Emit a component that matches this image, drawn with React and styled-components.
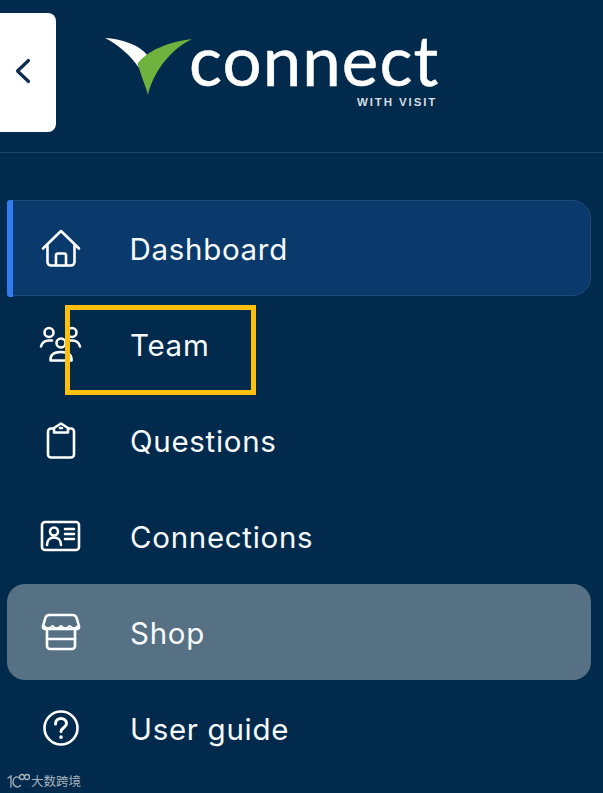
import React from "react";
import styled, { createGlobalStyle } from "styled-components";

const Global = createGlobalStyle`
  html, body { margin: 0; padding: 0; background: #012a4c; overflow: hidden; }
  #root { width: 603px; height: 793px; }
`;

const Page = styled.div`
  position: relative;
  width: 603px;
  height: 793px;
  background: #012a4c;
  color: #fff;
  font-family: "Inter", "Noto Sans", sans-serif;
  overflow: hidden;
`;

const Header = styled.header`
  height: 152px;
  display: flex;
  align-items: flex-start;
  border-bottom: 1.5px solid #1c4468;
`;

const CollapseButton = styled.button`
  width: 56px;
  height: 119px;
  margin-top: 13px;
  padding: 0 0 4px 15px;
  border: 0;
  border-radius: 0 8px 8px 0;
  background: #fff;
  display: flex;
  align-items: center;
  justify-content: flex-start;
`;

const Logo = styled.div`
  display: grid;
  grid-template-columns: 85px auto;
  margin: 36px 0 0 48px;
`;

const LogoWords = styled.div`
  display: flex;
  flex-direction: column;
  align-items: flex-end;
`;

const LogoName = styled.span`
  font-family: "Lato", sans-serif;
  font-size: 69px;
  line-height: 60px;
  letter-spacing: 1.1px;
  font-weight: 400;
  margin-top: -6px;
  -webkit-text-stroke: 0.5px #fff;
`;

const LogoTag = styled.span`
  font-family: "Liberation Sans", sans-serif;
  font-size: 11.5px;
  line-height: 12px;
  font-weight: 700;
  letter-spacing: 1.9px;
  color: #d6dde3;
  margin: 6px 2px 0 0;
`;

const Nav = styled.nav`
  display: flex;
  flex-direction: column;
  padding: 47px 12px 0 7px;
`;

const Row = styled.a`
  position: relative;
  height: 96px;
  box-sizing: border-box;
  display: grid;
  grid-template-columns: 44px auto;
  column-gap: 47px;
  justify-content: start;
  align-items: center;
  border-radius: ${(p) => (p.$tone === "active" ? "4px 18px 18px 4px" : "18px")};
  font-size: 29.5px;
  font-weight: 400;
  letter-spacing: 0.7px;
  color: #f7fafc;
  background: ${(p) => (p.$tone === "active" ? "#0a3a6b" : p.$tone === "hover" ? "#567084" : "transparent")};
  border: ${(p) => (p.$tone === "active" ? "1.5px solid #1f4a75" : "0")};
  padding-left: ${(p) => (p.$tone === "active" ? "30.5px" : "32px")};
`;

const Label = styled.span`
  position: relative;
  top: 1px;
`;

const Accent = styled.span`
  position: absolute;
  left: -1.5px;
  top: -1.5px;
  bottom: -1.5px;
  width: 6px;
  border-radius: 3px 0 0 3px;
  background: #2f7df0;
`;

const Icon = styled.svg`
  display: block;
  width: 44px;
  height: 44px;
  fill: none;
  stroke: #fff;
  stroke-width: 2.6;
  stroke-linecap: round;
  stroke-linejoin: round;
`;

const Highlight = styled.div`
  position: absolute;
  left: 65px;
  top: 305px;
  width: 191px;
  height: 90px;
  box-sizing: border-box;
  border: 5px solid #fdc00f;
`;

const Watermark = styled.div`
  position: absolute;
  left: 7px;
  top: 771px;
  display: flex;
  align-items: center;
  gap: 0;
  color: #a9b4bd;
  font-family: "Noto Sans CJK SC", sans-serif;
  font-size: 12.5px;
  line-height: 20px;
`;

const Chevron = () => (
  <svg width="16" height="26" viewBox="0 0 16 26" fill="none" stroke="#0b2c4c" strokeWidth="3.2" strokeLinecap="round" strokeLinejoin="round">
    <path d="M13.5 2.5 2.5 13l11 10.5" />
  </svg>
);

const Check = () => (
  <svg width="88" height="60" viewBox="0 0 88 60">
    <path d="M1 2C17 3 35 8 44 20L34 27 35 32C27 20 15 9 1 2Z" fill="#fff" />
    <path d="M88 3C70 5 46 12 34 27 35 35 41 48 44 59 47 44 60 17 88 3Z" fill="#6fb33e" />
  </svg>
);

const Home = () => (
  <Icon viewBox="0 0 44 44">
    <path d="M4 22.500 22 5l18 17.500" />
    <path d="M8.500 20v16a3.500 3.500 0 0 0 3.500 3.500h20a3.500 3.500 0 0 0 3.500-3.500V20" />
    <path d="M17 39V29.500a2 2 0 0 1 2-2h6a2 2 0 0 1 2 2V39" />
  </Icon>
);

const Team = () => (
  <Icon viewBox="0 0 44 44">
    <circle cx="10" cy="10.500" r="4.500" />
    <circle cx="33" cy="10.500" r="4.500" />
    <circle cx="22" cy="21" r="4.500" />
    <path d="M2 24.500c1-4 4-6 8-6h3" />
    <path d="M41 24.500c-1-4-4-6-8-6h-3" />
    <path d="M11.500 38.500v-1c0-5 4-7.500 10.500-7.500s10.500 2.500 10.500 7.500v1z" />
  </Icon>
);

const Clipboard = () => (
  <Icon viewBox="0 0 44 44">
    <path d="M15 10.500h-3a3 3 0 0 0-3 3v23a3 3 0 0 0 3 3h20a3 3 0 0 0 3-3v-23a3 3 0 0 0-3-3h-3" />
    <path d="M15 14.500v-4.500L22 5.500l7 4.500v4.500z" />
    <path d="M21 10h2" />
  </Icon>
);

const Card = () => (
  <Icon viewBox="0 0 44 44">
    <rect x="3" y="8" width="37" height="28" rx="3" />
    <circle cx="15" cy="17.500" r="4" />
    <path d="M8 31c0-5 3-7.500 7-7.500s7 2.500 7 7.500" />
    <path d="M26 15h9M26 20h9M26 25h9" />
  </Icon>
);

const Shop = () => (
  <Icon viewBox="0 0 44 44">
    <path d="M10 5h24a4 4 0 0 1 3.500 2.500L40 16c.5 2.500-1 3-3 3H7c-2 0-3.500-.5-3-3l2.500-8.500A4 4 0 0 1 10 5z" />
    <path d="M5 16c3 3 5 3 8.500 0 3 3 5.500 3 8.500 0 3 3 5.500 3 8.500 0 3.500 3 5.500 3 8.500 0" strokeWidth="2" />
    <path d="M8 19v17a3 3 0 0 0 3 3h22a3 3 0 0 0 3-3V19" />
    <path d="M8 29h28" />
  </Icon>
);

const Help = () => (
  <Icon viewBox="0 0 44 44">
    <circle cx="22" cy="22" r="16.500" />
    <path d="M16.500 18c0-3.500 2.500-5.500 5.500-5.500s5.500 2 5.500 5c0 4-5.500 4.500-5.500 8" strokeWidth="3" />
    <path d="M22 31v.2" strokeWidth="3.500" />
  </Icon>
);

const WatermarkMark = () => (
  <svg width="24" height="16" viewBox="0 0 24 16" fill="none" stroke="#a9b4bd" strokeWidth="1.300" strokeLinecap="round">
    <path d="M1 5 4 3v11" />
    <path d="M13 5.500C9 2 6 5 6 9s4 6.500 7.500 3.500" />
    <circle cx="15" cy="4" r="2.500" />
    <circle cx="20" cy="4" r="2.500" />
  </svg>
);

const items = [
  { label: "Dashboard", icon: Home, tone: "active" },
  { label: "Team", icon: Team },
  { label: "Questions", icon: Clipboard },
  { label: "Connections", icon: Card },
  { label: "Shop", icon: Shop, tone: "hover" },
  { label: "User guide", icon: Help },
];

export default function App() {
  return (
    <Page>
      <Global />
      <Header>
        <CollapseButton aria-label="Collapse">
          <Chevron />
        </CollapseButton>
        <Logo>
          <Check />
          <LogoWords>
            <LogoName>connect</LogoName>
            <LogoTag>WITH VISIT</LogoTag>
          </LogoWords>
        </Logo>
      </Header>
      <Nav>
        {items.map(({ label, icon: Glyph, tone }) => (
          <Row key={label} $tone={tone}>
            {tone === "active" && <Accent />}
            <Glyph />
            <Label>{label}</Label>
          </Row>
        ))}
      </Nav>
      <Highlight />
      <Watermark>
        <WatermarkMark />
        <span>大数跨境</span>
      </Watermark>
    </Page>
  );
}
